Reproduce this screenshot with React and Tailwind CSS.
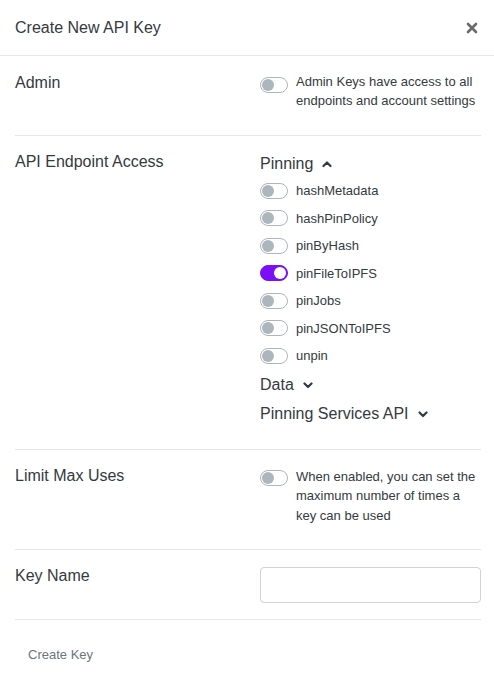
import { useState } from "react";

function Toggle({ on, onChange }) {
  return (
    <button
      type="button"
      onClick={onChange}
      className={`relative shrink-0 w-[28px] h-[16px] rounded-full border ${
        on ? "bg-[#7b0ff5] border-[#7b0ff5]" : "bg-white border-[#adb5bd]"
      }`}
    >
      <span
        className={`absolute top-[1px] w-[12px] h-[12px] rounded-full ${
          on ? "left-[13px] bg-white" : "left-[1px] bg-[#adb5bd]"
        }`}
      />
    </button>
  );
}

function Chevron({ up }) {
  return (
    <svg width="10" height="8" viewBox="0 0 10 8" className="ml-[9px]">
      <path
        d={up ? "M1.5 6 L5 2.5 L8.5 6" : "M1.5 2.5 L5 6 L8.5 2.5"}
        fill="none"
        stroke="#343a40"
        strokeWidth="2.2"
        strokeLinecap="round"
        strokeLinejoin="round"
      />
    </svg>
  );
}

const endpoints = [
  "hashMetadata",
  "hashPinPolicy",
  "pinByHash",
  "pinFileToIPFS",
  "pinJobs",
  "pinJSONToIPFS",
  "unpin",
];

export default function App() {
  const [admin, setAdmin] = useState(false);
  const [limit, setLimit] = useState(false);
  const [pins, setPins] = useState({ pinFileToIPFS: true });

  return (
    <div className="w-[494px] h-[687px] bg-white text-[#343a40] font-['Liberation_Sans',Arial,sans-serif]">
      <div className="h-[56px] px-[15px] flex items-center justify-between border-b border-[#e5e7ea]">
        <h3 className="text-[16px] leading-6">Create New API Key</h3>
        <svg width="12" height="12" viewBox="0 0 12 12" className="mr-[1px]">
          <path d="M2 2 L10 10 M10 2 L2 10" stroke="#6b6b6b" strokeWidth="2.6" strokeLinecap="round" />
        </svg>
      </div>

      <div className="pl-[15px] pr-[13px]">
        <div className="flex pt-[15px] pb-[25px] border-b border-[#e5e7ea]">
          <div className="w-[245px] text-[16px] leading-6">Admin</div>
          <div className="flex-1 flex gap-[8px] pt-[1px] pr-[2px]">
            <div className="pt-[3px]">
              <Toggle on={admin} onChange={() => setAdmin(!admin)} />
            </div>
            <p className="text-[13px] leading-[19px]">
              Admin Keys have access to all endpoints and account settings
            </p>
          </div>
        </div>

        <div className="flex pt-[14px] pb-[20px] border-b border-[#e5e7ea]">
          <div className="w-[245px] text-[16px] leading-6">API Endpoint Access</div>
          <div className="flex-1">
            <div className="flex items-center text-[16px] leading-6 h-[26px] mt-[1px]">
              Pinning
              <Chevron up />
            </div>
            <div className="flex flex-col">
              {endpoints.map((e) => (
                <div key={e} className="flex items-center gap-[8px] h-[27.5px]">
                  <Toggle on={!!pins[e]} onChange={() => setPins({ ...pins, [e]: !pins[e] })} />
                  <span className="text-[13px]">{e}</span>
                </div>
              ))}
            </div>
            <div className="flex items-center text-[16px] leading-6 mt-[1px] h-[29px]">
              Data
              <Chevron />
            </div>
            <div className="flex items-center text-[16px] leading-6 h-[29px]">
              Pinning Services API
              <Chevron />
            </div>
          </div>
        </div>

        <div className="flex pt-[14px] pb-[24px] border-b border-[#e5e7ea]">
          <div className="w-[245px] text-[16px] leading-6">Limit Max Uses</div>
          <div className="flex-1 flex gap-[8px] pt-[3px] pr-[2px]">
            <div className="pt-[1px]">
              <Toggle on={limit} onChange={() => setLimit(!limit)} />
            </div>
            <p className="text-[13px] leading-[19.5px]">
              When enabled, you can set the maximum number of times a key can be used
            </p>
          </div>
        </div>

        <div className="flex pt-[14px] pb-[16px] border-b border-[#e5e7ea]">
          <div className="w-[245px] text-[16px] leading-6">Key Name</div>
          <div className="flex-1 pt-[3px]">
            <input
              type="text"
              className="w-full h-[36px] rounded-[4px] border border-[#ced4da] px-3 text-[14px] outline-none"
            />
          </div>
        </div>

        <div className="pt-[22px]">
          <button type="button" className="px-[13px] text-[13px] leading-5 text-[#6c757d]">
            Create Key
          </button>
        </div>
      </div>
    </div>
  );
}
